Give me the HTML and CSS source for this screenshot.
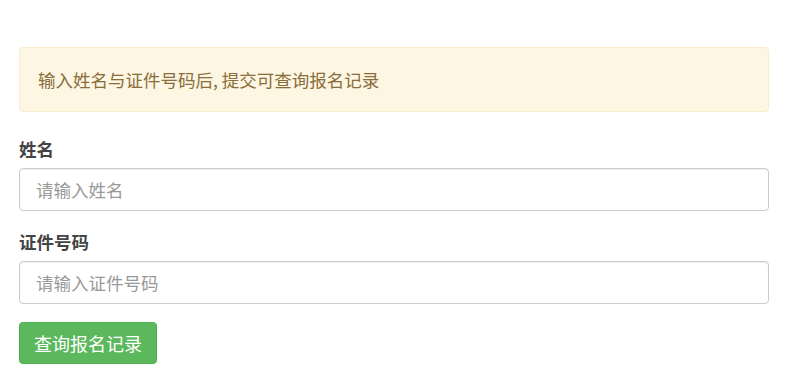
FILE: index.html
```html
<!DOCTYPE html>
<html lang="zh-CN">
<head>
<meta charset="utf-8">
<title>查询报名记录</title>
<link rel="stylesheet" href="styles.css">
</head>
<body>
<div class="container">
  <div class="alert">输入姓名与证件号码后, 提交可查询报名记录</div>
  <form class="form">
    <div class="form-group">
      <label class="label" for="name">姓名</label>
      <input class="input" id="name" type="text" placeholder="请输入姓名">
    </div>
    <div class="form-group">
      <label class="label" for="idno">证件号码</label>
      <input class="input" id="idno" type="text" placeholder="请输入证件号码">
    </div>
    <button class="btn" type="button">查询报名记录</button>
  </form>
</div>
</body>
</html>
```

FILE: styles.css
```css
html, body {
  margin: 0;
  padding: 0;
  background: #fff;
}
body {
  font-family: "Noto Sans CJK SC", "Noto Sans", sans-serif;
  font-size: 17.5px;
  color: #333;
}
.container {
  padding: 47px 28px 0 19px;
}
.alert {
  background: #fcf6e2;
  border: 1px solid #faebcc;
  border-radius: 4px;
  color: #8a6d3b;
  padding: 0 18px;
  height: 63px;
  line-height: 63px;
  margin-bottom: 25px;
}
.form-group {
  display: flex;
  flex-direction: column;
  margin-bottom: 19px;
}
.label {
  font-weight: bold;
  color: #444;
  line-height: 24px;
  margin-bottom: 7px;
}
.input {
  box-sizing: border-box;
  height: 43px;
  border: 1px solid #ccc;
  border-radius: 4px;
  padding: 0 16px;
  font-family: inherit;
  font-size: 17.5px;
  color: #555;
  box-shadow: inset 0 1px 1px rgba(0,0,0,0.075);
  outline: none;
}
.input::placeholder {
  color: #999;
}
.btn {
  box-sizing: border-box;
  height: 42px;
  width: 138px;
  margin-top: -1px;
  background: #5cb85c;
  border: 1px solid #4cae4c;
  border-radius: 4px;
  color: #fff;
  font-family: inherit;
  font-size: 18px;
  padding: 0;
}
```
